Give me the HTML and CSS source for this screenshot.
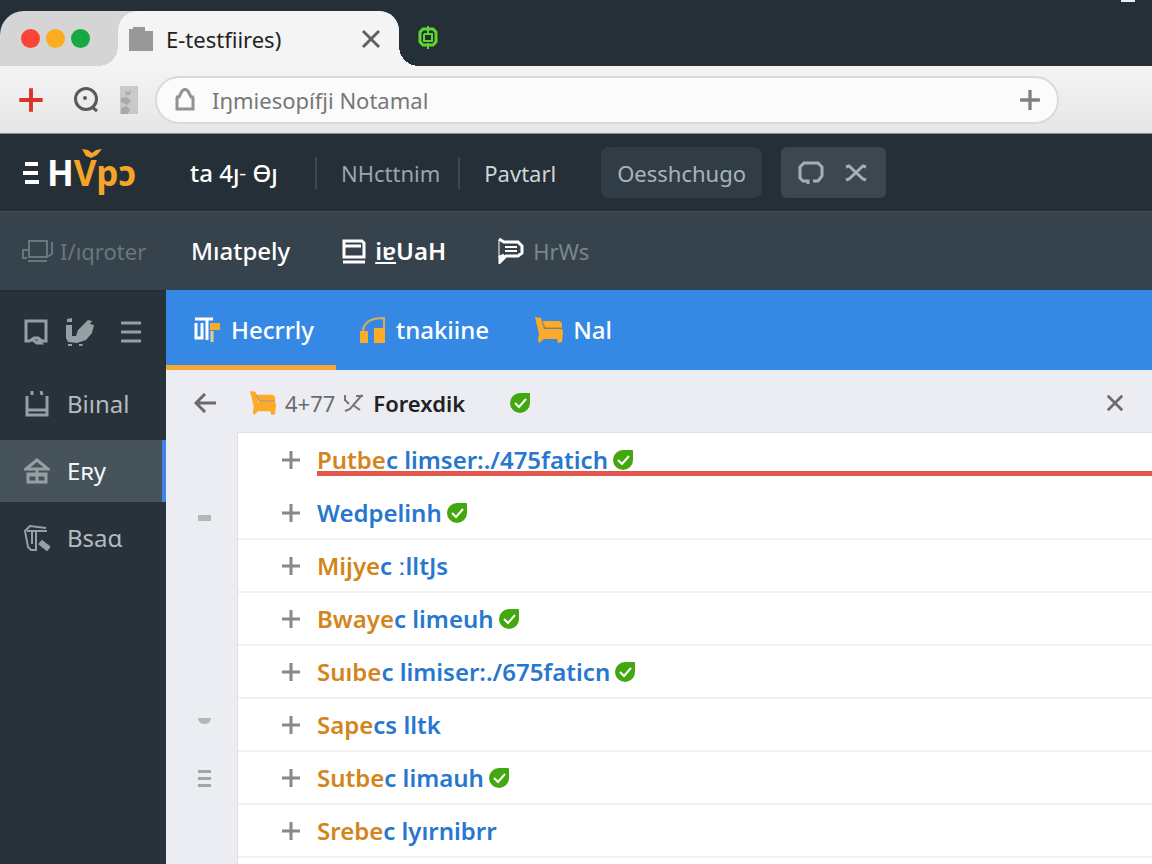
FILE: index.html
```
<!DOCTYPE html>
<html lang="en">
<head>
    <meta charset="UTF-8">
    <meta name="viewport" content="width=device-width, initial-scale=1.0">
    <title>E-testfiires)</title>
    <link rel="stylesheet" href="styles.css">
</head>
<body>
    <!-- shared icons -->
    <svg class="sprite" aria-hidden="true">
        <symbol id="check" viewBox="0 0 22 22">
            <path d="M11 1H20Q21 1 21 2V11A10 10 0 1 1 11 1Z" fill="#43a810"/>
            <path d="M6 11l4 4L17 7" fill="none" stroke="#fff" stroke-width="2"/>
        </symbol>
        <symbol id="plus" viewBox="0 0 20 20">
            <path d="M10 1v18M1 10h18" stroke="currentColor" stroke-width="3"/>
        </symbol>
        <symbol id="chair" viewBox="0 0 28 28">
            <path d="M0 1L6 2L9 13H26Q28 13 28 16L27 26L23 27L22 23H9L4 27L3 24L4 18Z" fill="#fbab28"/>
            <path d="M7 5H24L27 7V12H10Z" fill="#fbab28"/>
            <path d="M7 5L10 12H27" fill="none" stroke="#a98245" stroke-width="1"/>
        </symbol>
        <symbol id="cross" viewBox="0 0 20 20">
            <path d="M2 2l16 16M18 2L2 18" stroke="currentColor" stroke-width="3"/>
        </symbol>
    </svg>

    <div class="tab-strip">
        <div class="tab-group">
            <div class="lights">
                <span class="light red"></span>
                <span class="light yellow"></span>
                <span class="light green"></span>
            </div>
            <div class="browser-tab">
                <svg width="24" height="24" viewBox="0 0 24 24"><path d="M0 2H4V0H16V4H24V24H0Z" fill="#989898"/></svg>
                <span class="tab-title">E-testfiires)</span>
                <button class="icon-btn" type="button" aria-label="Close tab"><svg width="20" height="20"><use href="#cross"/></svg></button>
            </div>
        </div>
        <button class="icon-btn new-tab" type="button" aria-label="New tab">
            <svg width="20" height="24" viewBox="0 0 20 24" fill="none" stroke="#5fd62b" stroke-width="3">
                <path d="M5 3H15L18 6V16L15 19H5L2 16V6Z"/>
                <path d="M10 0V7M10 17V23M6 8V15H14V8H6" stroke-width="2"/>
            </svg>
        </button>
        <span class="minimize"></span>
    </div>

    <div class="toolbar">
        <button class="icon-btn add" type="button" aria-label="Add"><svg width="26" height="26"><use href="#plus"/></svg></button>
        <button class="icon-btn" type="button" aria-label="Search">
            <svg width="26" height="26" viewBox="0 0 26 26" fill="none" stroke="#5a5a5a" stroke-width="3">
                <circle cx="13" cy="12" r="10.500"/>
                <path d="M19 20l5 4"/>
                <circle cx="12" cy="11" r="1" stroke-width="2"/>
            </svg>
        </button>
        <svg width="18" height="28" viewBox="0 0 18 28">
            <path d="M0 0H18V28H0Z" fill="#c9c9c9"/>
            <path d="M5 4l3 3 3-4-1 6H6ZM1 12l6-1 4 4-4 4-6-3ZM1 22l5-2 4 3-2 5H1Z" fill="#a9a9a9"/>
        </svg>
        <div class="address">
            <svg width="20" height="23" viewBox="0 0 20 23" fill="none" stroke="#929292" stroke-width="3">
                <path d="M2 9V21H18V9M1 9H4L7 3L10 1L13 3L16 9H19"/>
            </svg>
            <input type="text" aria-label="Address" value="Iŋmiesopífji Notamal">
            <button class="icon-btn" type="button" aria-label="Add bookmark"><svg width="22" height="22"><use href="#plus"/></svg></button>
        </div>
    </div>

    <header class="nav">
        <a class="logo" href="#">
            <svg width="16" height="22" viewBox="0 0 16 22"><path d="M2 2H15M0 11H15M2 20H16" stroke="#fff" stroke-width="4"/></svg>
            <span class="logo-h">H</span><span class="logo-rest">Vpɔ</span>
            <svg class="leaf" width="20" height="10" viewBox="0 0 20 10"><path d="M0 0L6 1L10 4L14 1L20 0L15 6L9 9L4 7Z" fill="#f6a428"/></svg>
        </a>
        <a class="nav-link strong" href="#">ta 4ȷ˗ Өȷ</a>
        <a class="nav-link muted" href="#">NHcttnim</a>
        <a class="nav-link" href="#">Pavtarl</a>
        <button class="nav-btn" type="button">Oesshchugo</button>
        <div class="nav-tools">
            <button class="icon-btn" type="button" aria-label="Comments">
                <svg width="26" height="24" viewBox="0 0 26 24" fill="none" stroke="#a5b0b6" stroke-width="3">
                    <path d="M10 23V20H5L2 17V6L6 2H20L24 6V15L20 20H15"/>
                </svg>
            </button>
            <button class="icon-btn" type="button" aria-label="Close">
                <svg width="22" height="18" viewBox="0 0 22 18" fill="none" stroke="#a5b0b6" stroke-width="3">
                    <path d="M1 3L4 2L18 15L21 16M21 3L18 2L4 15L1 16"/>
                </svg>
            </button>
        </div>
    </header>

    <nav class="subnav">
        <a class="sub-link faded first" href="#">
            <svg width="32" height="24" viewBox="0 0 32 24" fill="none" stroke="currentColor" stroke-width="2">
                <path d="M7 2H25V18H7ZM7 11H1V19H5M6 22H25M25 18L30 15V3"/>
            </svg>
            I/ıqroter
        </a>
        <a class="sub-link" href="#">Mıatpely</a>
        <a class="sub-link bold" href="#">
            <svg width="24" height="25" viewBox="0 0 24 25" fill="none" stroke="currentColor" stroke-width="3">
                <path d="M2 2H20L22 4V18H2ZM2 7H19M1 23H23" />
            </svg>
            <span><u>iɐ</u>UaH</span>
        </a>
        <a class="sub-link faded" href="#">
            <svg width="26" height="26" viewBox="0 0 26 26" fill="none" stroke="#fff" stroke-width="3">
                <path d="M1 1L6 4H20L24 8V15L20 18H8L2 24V19L6 17"/>
                <path d="M1 2V20" stroke-width="1"/>
                <path d="M7 9H19M7 13H19" stroke-width="2"/>
            </svg>
            HrWs
        </a>
    </nav>

    <div class="layout">
        <aside class="sidebar">
            <div class="side-tools">
                <svg width="24" height="26" viewBox="0 0 24 26" fill="none" stroke="currentColor" stroke-width="3">
                    <path d="M6 22H2V2H22V22H18L14 19H10L6 22"/>
                    <path d="M9 21L13 24L17 24L14 20"/>
                </svg>
                <svg width="28" height="28" viewBox="0 0 28 28" fill="currentColor">
                    <path d="M1 1L6 0V4H1ZM0 7H6V18L10 18L12 12L19 5L22 2L26 3L24 6L28 7L26 15L20 22L11 25L2 24L0 20ZM2 26H6V28H2ZM13 26H17L16 28H13Z"/>
                </svg>
                <button class="icon-btn" type="button" aria-label="Menu">
                    <svg width="20" height="22" viewBox="0 0 20 22"><path d="M0 2H20M0 11H20M0 20H20" stroke="currentColor" stroke-width="3"/></svg>
                </button>
            </div>
            <a class="side-link" href="#">
                <svg width="26" height="26" viewBox="0 0 26 26" fill="none" stroke="currentColor" stroke-width="3">
                    <path d="M3 5V24H23V5M3 19H23"/>
                    <path d="M8 4V0M17 0L18 4"/>
                </svg>
                Biınal
            </a>
            <a class="side-link active" href="#">
                <svg width="26" height="26" viewBox="0 0 26 26" fill="none" stroke="currentColor" stroke-width="3">
                    <path d="M2 11L13 2L24 11Z"/>
                    <path d="M4 16V24H22V16ZM4 17H22M13 11V24"/>
                </svg>
                Eʀy
            </a>
            <a class="side-link" href="#">
                <svg width="26" height="26" viewBox="0 0 26 26" fill="none" stroke="currentColor" stroke-width="2">
                    <path d="M22 3L6 1L1 6L4 22L7 25H12V7M3 6H23M8 7V19"/>
                    <path d="M16 17L25 24" stroke-width="6"/>
                </svg>
                Bsaɑ
            </a>
        </aside>

        <main class="content">
            <nav class="tabs">
                <a class="tab selected" href="#">
                    <svg width="28" height="26" viewBox="0 0 28 26">
                        <path d="M2 2H20M3 6V21H9V6M14 3V23" fill="none" stroke="#fff" stroke-width="3"/>
                        <path d="M17 6H27V13H17Z" fill="#fbab28"/>
                        <path d="M19 14V25" stroke="#e6cf8c" stroke-width="3"/>
                    </svg>
                    Hecrrly
                </a>
                <a class="tab" href="#">
                    <svg width="26" height="28" viewBox="0 0 26 28">
                        <path d="M3 15Q4 2 24 2V12" fill="none" stroke="#d8ac5c" stroke-width="2"/>
                        <path d="M0 15H8V27H0ZM14 12H25V27H14Z" fill="#fbab28"/>
                    </svg>
                    tnakiine
                </a>
                <a class="tab" href="#">
                    <svg width="28" height="28"><use href="#chair"/></svg>
                    Nal
                </a>
            </nav>

            <div class="crumbs">
                <button class="icon-btn back" type="button" aria-label="Back">
                    <svg width="22" height="20" viewBox="0 0 22 20" fill="none" stroke="currentColor" stroke-width="3"><path d="M22 10H2M11 1L2 10L11 19"/></svg>
                </button>
                <svg width="26" height="26"><use href="#chair"/></svg>
                <span class="crumb-num">4+77</span>
                <svg width="20" height="18" viewBox="0 0 20 18" fill="none" stroke="#757575" stroke-width="2"><path d="M1 1V6L5 10M1 17L6 15L18 1M12 2H19M9 11L16 16"/></svg>
                <span class="crumb-name">Forexdik</span>
                <svg class="crumb-check" width="22" height="22"><use href="#check"/></svg>
                <button class="icon-btn crumb-close" type="button" aria-label="Close panel"><svg width="18" height="18"><use href="#cross"/></svg></button>
            </div>

            <div class="panel">
                <div class="gutter">
                    <span class="mark"></span>
                    <span class="mark round"></span>
                    <span class="mark lines"></span>
                </div>
                <ul class="list">
                    <li class="row flagged">
                        <button class="icon-btn" type="button" aria-label="Expand"><svg width="20" height="20"><use href="#plus"/></svg></button>
                        <a href="#"><span class="key">Putbe</span>c limser:./475fatich</a>
                        <svg width="22" height="22"><use href="#check"/></svg>
                    </li>
                    <li class="row">
                        <button class="icon-btn" type="button" aria-label="Expand"><svg width="20" height="20"><use href="#plus"/></svg></button>
                        <a href="#">Wedpelinh</a>
                        <svg width="22" height="22"><use href="#check"/></svg>
                    </li>
                    <li class="row">
                        <button class="icon-btn" type="button" aria-label="Expand"><svg width="20" height="20"><use href="#plus"/></svg></button>
                        <a href="#"><span class="key">Mijye</span>c ːlltJs</a>
                    </li>
                    <li class="row">
                        <button class="icon-btn" type="button" aria-label="Expand"><svg width="20" height="20"><use href="#plus"/></svg></button>
                        <a href="#"><span class="key">Bwaye</span>c limeuh</a>
                        <svg width="22" height="22"><use href="#check"/></svg>
                    </li>
                    <li class="row">
                        <button class="icon-btn" type="button" aria-label="Expand"><svg width="20" height="20"><use href="#plus"/></svg></button>
                        <a href="#"><span class="key">Suıbe</span>c limiser:./675faticn</a>
                        <svg width="22" height="22"><use href="#check"/></svg>
                    </li>
                    <li class="row">
                        <button class="icon-btn" type="button" aria-label="Expand"><svg width="20" height="20"><use href="#plus"/></svg></button>
                        <a href="#"><span class="key">Sape</span>cs lltk</a>
                    </li>
                    <li class="row">
                        <button class="icon-btn" type="button" aria-label="Expand"><svg width="20" height="20"><use href="#plus"/></svg></button>
                        <a href="#"><span class="key">Sutbe</span>c limauh</a>
                        <svg width="22" height="22"><use href="#check"/></svg>
                    </li>
                    <li class="row">
                        <button class="icon-btn" type="button" aria-label="Expand"><svg width="20" height="20"><use href="#plus"/></svg></button>
                        <a href="#"><span class="key">Srebe</span>c lyırnibrr</a>
                    </li>
                </ul>
            </div>
        </main>
    </div>
</body>
</html>
```
FILE: styles.css
```
* {
    box-sizing: border-box;
}

body {
    margin: 0;
    min-height: 100vh;
    display: flex;
    flex-direction: column;
    font-family: "Noto Sans", "Open Sans", sans-serif;
    font-size: 24px;
    line-height: 32px;
    background-color: #27323b;
    overflow: hidden;
}

a {
    color: inherit;
    text-decoration: none;
    white-space: nowrap;
}

svg {
    display: block;
    flex: none;
}

.sprite {
    position: absolute;
    width: 0;
    height: 0;
}

.icon-btn {
    display: block;
    flex: none;
    padding: 0;
    border: none;
    background: none;
    color: inherit;
    cursor: pointer;
}

/* Browser tabs */
.tab-strip {
    display: flex;
    align-items: flex-end;
    height: 66px;
    background-color: #242f38;
}

.tab-group {
    display: flex;
    height: 55px;
    border-radius: 24px 20px 0 0;
    background-color: #d5d5d5;
}

.lights {
    display: flex;
    align-items: center;
    gap: 6px;
    width: 118px;
    padding-left: 21px;
}

.light {
    width: 19px;
    height: 19px;
    border-radius: 50%;
}

.red {
    background-color: #fb4338;
}

.yellow {
    background-color: #fcac1f;
}

.green {
    background-color: #16a943;
}

.browser-tab {
    position: relative;
    display: flex;
    align-items: center;
    gap: 13px;
    width: 281px;
    padding: 0 18px 0 11px;
    border-radius: 20px 20px 0 0;
    background-color: #f4f4f4;
    font-size: 22px;
    color: #606060;
}

.browser-tab::before,
.browser-tab::after {
    content: "";
    position: absolute;
    bottom: 0;
    width: 20px;
    height: 20px;
}

.browser-tab::before {
    right: 100%;
    background: radial-gradient(circle at 0 0, transparent 20px, #f4f4f4 20px);
}

.browser-tab::after {
    left: 100%;
    background: radial-gradient(circle at 100% 0, transparent 20px, #f4f4f4 20px);
}

.tab-title {
    flex: 1;
    color: #222;
}

.new-tab {
    margin: 0 0 16px 19px;
}

.minimize {
    align-self: flex-start;
    width: 14px;
    height: 2px;
    margin: 0 17px 0 auto;
    background-color: #e8eaeb;
}

/* Address bar */
.toolbar {
    display: flex;
    align-items: center;
    height: 68px;
    padding: 0 93px 0 18px;
    background: linear-gradient(#f4f4f4, #e6e6e6);
    border-bottom: 1px solid #8a8d90;
}

.toolbar .add {
    margin-right: 29px;
    color: #d93429;
}

.toolbar > svg {
    margin: 0 17px 0 21px;
}

.address {
    display: flex;
    flex: 1;
    align-items: center;
    gap: 17px;
    height: 48px;
    padding: 0 16px 0 18px;
    border: 2px solid #dadada;
    border-radius: 24px;
    background-color: #fbfbfb;
    font-size: 22px;
    color: #808080;
}

.address input {
    flex: 1;
    min-width: 0;
    padding: 0;
    border: none;
    outline: none;
    background: none;
    font: inherit;
    color: #777;
}

/* Top navigation */
.nav {
    display: flex;
    align-items: center;
    height: 77px;
    padding-left: 23px;
    background-color: #242f38;
    font-size: 22px;
    color: #d0d5d8;
}

.logo {
    position: relative;
    display: flex;
    align-items: center;
    width: 143px;
    font-size: 35px;
    font-weight: 700;
}

.logo-h {
    margin-left: 8px;
    color: #fff;
}

.logo-rest {
    color: #f6a428;
}

.leaf {
    position: absolute;
    left: 59px;
    top: -8px;
}

.nav-link {
    padding: 0 18px 0 24px;
    border-left: 2px solid #3d4851;
}

.nav-link.strong {
    width: 149px;
    border-left: none;
    font-size: 24px;
    font-weight: 500;
    color: #fff;
}

.nav-link.muted {
    color: #9aa4aa;
}

.nav-btn {
    height: 51px;
    margin: 0 19px 0 27px;
    padding: 0 16px;
    border: none;
    border-radius: 8px;
    background-color: #313d46;
    font: inherit;
    color: #a9b3b9;
    cursor: pointer;
}

.nav-tools {
    display: flex;
    align-items: center;
    gap: 21px;
    height: 51px;
    padding: 0 19px 0 17px;
    border-radius: 6px;
    background-color: #3c4850;
}

/* Second navigation */
.subnav {
    display: flex;
    align-items: center;
    gap: 52px;
    height: 79px;
    padding-left: 22px;
    background-color: #36434c;
    border-top: 1px solid #414d56;
    color: #fff;
}

.sub-link {
    display: flex;
    align-items: center;
    gap: 9px;
    font-weight: 500;
}

.sub-link.bold {
    font-weight: 600;
}

.sub-link.faded {
    font-size: 22px;
    font-weight: 400;
    color: #7b868e;
}

.sub-link.first {
    gap: 6px;
    width: 117px;
    color: #69767e;
}

/* Page layout */
.layout {
    display: flex;
    flex: 1;
}

.sidebar {
    display: flex;
    flex-direction: column;
    flex: none;
    gap: 5px;
    width: 166px;
    background-color: #27323b;
    border-top: 1px solid #222c34;
    color: #969fa4;
}

.side-tools {
    display: flex;
    align-items: center;
    height: 77px;
    padding: 4px 25px 0 24px;
}

.side-tools svg + svg {
    margin-left: 18px;
}

.side-tools .icon-btn {
    margin-left: auto;
}

.side-link {
    display: flex;
    align-items: center;
    gap: 17px;
    height: 62px;
    padding-left: 24px;
    color: #b4bbbf;
}

.side-link svg {
    color: #969fa4;
}

.side-link.active {
    border-right: 4px solid #3f85e6;
    background-color: #46535b;
    color: #f4f6f7;
}

.content {
    display: flex;
    flex-direction: column;
    flex: 1;
    min-width: 0;
    background-color: #ebedf2;
}

.tabs {
    display: flex;
    height: 80px;
    background-color: #3589e5;
    color: #fff;
}

.tab {
    display: flex;
    align-items: center;
    gap: 10px;
    padding: 4px 22px 0 24px;
    border-bottom: 5px solid transparent;
    font-weight: 500;
}

.tab.selected {
    padding-left: 27px;
    border-color: #f6a935;
}

.crumbs {
    display: flex;
    align-items: center;
    height: 62px;
    padding: 4px 28px 0 28px;
    font-size: 22px;
    color: #6b6b6b;
}

.back {
    margin-right: 34px;
}

.crumb-num {
    margin: 0 9px 0 9px;
}

.crumb-name {
    margin-left: 9px;
    font-weight: 600;
    color: #222;
}

.crumb-check {
    margin-left: 44px;
}

.crumb-close {
    margin-left: auto;
}

.panel {
    display: flex;
    flex: 1;
}

.gutter {
    flex: none;
    width: 72px;
    padding: 83px 0 0 32px;
    border-right: 1px solid #dcdee2;
}

.mark {
    display: block;
    width: 13px;
    height: 6px;
    background-color: #b4b6ba;
}

.mark.round {
    margin-top: 197px;
    border-radius: 0 0 6px 6px;
}

.mark.lines {
    height: 18px;
    margin-top: 46px;
    background: repeating-linear-gradient(#a2a4a7 0 3px, transparent 3px 7px);
}

/* List */
.list {
    flex: 1;
    min-width: 0;
    margin: 0;
    padding: 1px 0 0;
    list-style: none;
    border-top: 1px solid #e2e3e6;
    background-color: #fff;
}

.row {
    position: relative;
    display: flex;
    align-items: center;
    height: 53px;
    padding-left: 43px;
    border-bottom: 2px solid #f1f1f2;
    font-weight: 600;
    color: #2877cf;
}

.row .icon-btn {
    margin-right: 16px;
    color: #888;
}

.row > svg {
    margin-left: 4px;
}

.key {
    color: #d3851b;
}

.row.flagged {
    border-bottom-color: transparent;
}

.row.flagged::after {
    content: "";
    position: absolute;
    left: 79px;
    right: 0;
    bottom: 9px;
    height: 5px;
    background-color: #e2574c;
}
```
